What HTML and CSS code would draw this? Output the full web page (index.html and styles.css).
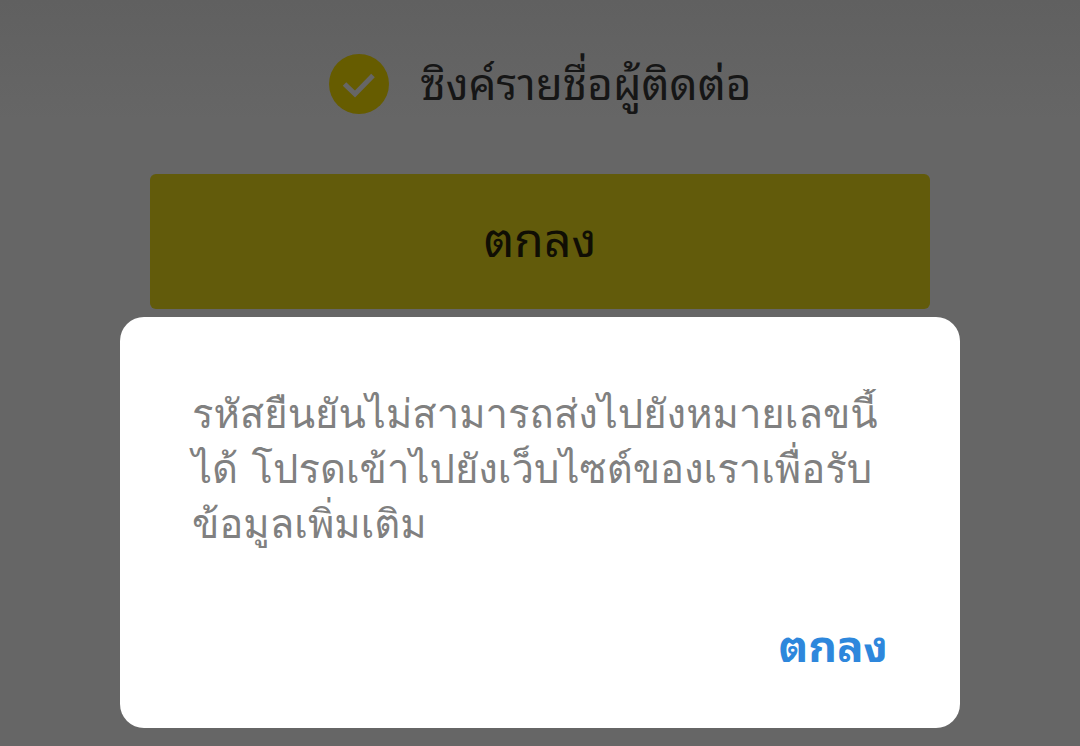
FILE: index.html
```html
<!DOCTYPE html>
<html lang="th">
<head>
<meta charset="utf-8">
<meta name="viewport" content="width=device-width, initial-scale=1">
<title>ซิงค์รายชื่อผู้ติดต่อ</title>
<link rel="stylesheet" href="styles.css">
</head>
<body>
<main class="page">
  <label class="sync">
    <input class="sync-input" type="checkbox" checked>
    <svg class="sync-icon" viewBox="0 0 60 60" aria-hidden="true"><circle cx="30" cy="30" r="30" fill="#665c00"/><path d="M15.5 30L26 40L44 21.5" fill="none" stroke="#666" stroke-width="5"/></svg>
    <span class="sync-text">ซิงค์รายชื่อผู้ติดต่อ</span>
  </label>
  <button class="submit" type="button">ตกลง</button>
  <section class="dialog" role="alertdialog" aria-modal="true" aria-describedby="message">
    <p class="message" id="message">รหัสยืนยันไม่สามารถส่งไปยังหมายเลขนี้<br>ได้ โปรดเข้าไปยังเว็บไซต์ของเราเพื่อรับ<br>ข้อมูลเพิ่มเติม</p>
    <button class="confirm" type="button">ตกลง</button>
  </section>
</main>
</body>
</html>
```

FILE: styles.css
```css
* { box-sizing: border-box; }
body { margin: 0; background: linear-gradient(#606060, #666 120px); font-family: "Noto Sans Thai Looped", Loma, "Noto Sans", sans-serif; }
button { border: 0; font-family: inherit; cursor: pointer; }
.page { display: flex; flex-direction: column; align-items: center; min-height: 100vh; padding: 54px 120px 18px; }
.sync { display: flex; align-items: center; gap: 32px; height: 60px; color: #161616; font-size: 44px; }
.sync-input { position: absolute; opacity: 0; }
.sync-icon { width: 60px; height: 60px; }
.sync-text { padding-bottom: 8px; }
.submit { width: calc(100% - 60px); height: 135px; margin-top: 60px; padding: 0 0 12px; border-radius: 6px; background: #625b0b; color: #100e04; font-size: 48px; }
.dialog { display: flex; flex-direction: column; width: 100%; margin-top: 8px; padding: 70px 72px 50px; border-radius: 24px; background: #fff; }
.message { margin: 0; color: #808080; font-family: Loma, "Noto Sans", sans-serif; font-size: 40px; line-height: 55px; white-space: nowrap; clip-path: inset(2px -8px -8px); }
.confirm { align-self: flex-end; margin-top: 54px; padding: 0; background: none; color: #2e87dc; font-size: 44px; font-weight: 700; line-height: 72px; }
```
